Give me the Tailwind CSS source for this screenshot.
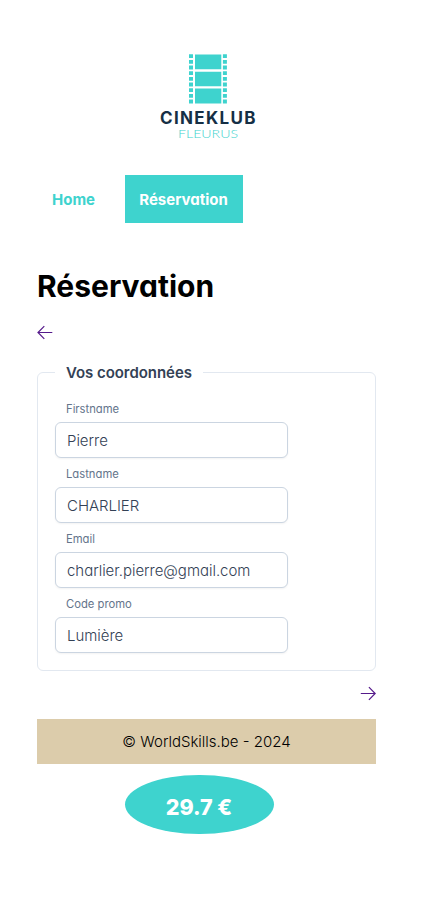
<!DOCTYPE html>
<html lang="fr">
<head>
<meta charset="utf-8">
<meta name="viewport" content="width=device-width, initial-scale=1">
<title>Cineklub Fleurus</title>
<script src="https://cdn.jsdelivr.net/npm/@tailwindcss/browser@4"></script>
</head>
<body class="bg-white font-['Inter',sans-serif] [font-feature-settings:'cv11'] text-[15px] text-black">
<div class="ml-[37px] w-[339px] pt-[50px]">
  <header class="flex justify-center">
    <svg class="block ml-[7px] h-[95px] w-[120px]" viewBox="150 50 120 95" role="img" aria-label="Cineklub Fleurus">
      <g fill="#3ed3ce">
        <path d="M195 54.500h26.300v14.800h-26.300zM195 71.700h26.300v14.600h-26.300zM195 88.500h26.300v15h-26.300z"/>
        <path id="perf" d="M189 54.300h4v3.800h-4zM189 59.900h4v3.900h-4zM189 65.600h4v3.900h-4zM189 71.200h4v3.900h-4zM189 76.900h4v3.900h-4zM189 82.500h4v3.900h-4zM189 88.200h4v3.900h-4zM189 93.900h4v3.900h-4zM189 99.500h4v3.900h-4z"/>
        <use href="#perf" x="33.900"/>
      </g>
      <text x="160" y="123.800" textLength="95.500" lengthAdjust="spacing" font-family="Inter, sans-serif" font-weight="700" font-size="17" fill="#152f45">CINEKLUB</text>
      <text x="178" y="138" textLength="60" lengthAdjust="spacingAndGlyphs" font-family="Lato, sans-serif" font-weight="300" font-size="11.800" fill="#3ed3ce">FLEURUS</text>
    </svg>
  </header>

  <nav class="mt-[30px] flex h-12 gap-[14.500px] font-bold leading-[50px] text-[#3ed3ce]">
    <a class="w-[73px] pl-[15px]">Home</a>
    <a class="w-[118px] bg-[#3ed3ce] text-center text-white">Réservation</a>
  </nav>

  <h1 class="mt-[45px] text-[30px] leading-9 font-bold">Réservation</h1>
  <a class="mt-[20px] block h-4 text-[#551a8b]">
    <svg class="h-4 w-4" viewBox="0 0 16 16" fill="none" stroke="currentColor" stroke-width="1.200"><path d="M15.300 8.500H1M7.300 2.200L1 8.500L7.300 14.800"/></svg>
  </a>

  <fieldset class="mt-[22px] h-[308.500px] rounded-md border border-[#e2e8f0] pl-[17px]">
    <legend class="h-[20px] px-[11px] text-[15px] leading-[22px] font-semibold tracking-[-0.05px] text-[#334155]">Vos coordonnées</legend>
    <div class="flex w-[232.500px] flex-col pt-[19px]">
      <label class="h-[65px]"><span class="block h-[21px] pl-[11px] text-[11.250px] leading-[17px] text-[#64748b]">Firstname</span>
        <input class="block h-9 w-full rounded-md border border-[#cbd5e1] bg-white px-[11px] font-light text-[15px] tracking-[-0.03px] text-[#334155] shadow-xs" value="Pierre"></label>
      <label class="h-[65px]"><span class="block h-[21px] pl-[11px] text-[11.250px] leading-[17px] text-[#64748b]">Lastname</span>
        <input class="block h-9 w-full rounded-md border border-[#cbd5e1] bg-white px-[11px] font-light text-[15px] tracking-[-0.03px] text-[#334155] shadow-xs" value="CHARLIER"></label>
      <label class="h-[65px]"><span class="block h-[21px] pl-[11px] text-[11.250px] leading-[17px] text-[#64748b]">Email</span>
        <input class="block h-9 w-full rounded-md border border-[#cbd5e1] bg-white px-[11px] font-light text-[15px] tracking-[-0.03px] text-[#334155] shadow-xs" value="charlier.pierre@gmail.com"></label>
      <label class="h-[65px]"><span class="block h-[21px] pl-[11px] text-[11.250px] leading-[17px] text-[#64748b]">Code promo</span>
        <input class="block h-9 w-full rounded-md border border-[#cbd5e1] bg-white px-[11px] font-light text-[15px] tracking-[-0.03px] text-[#334155] shadow-xs" value="Lumière"></label>
    </div>
  </fieldset>

  <a class="mt-[14.500px] flex h-4 justify-end text-[#551a8b]">
    <svg class="h-4 w-4" viewBox="0 0 16 16" fill="none" stroke="currentColor" stroke-width="1.200"><path d="M.8 8.500H15M8.900 2.200L15.200 8.500L8.900 14.800"/></svg>
  </a>

  <footer class="mt-[18px] h-[44.500px] bg-[#dcccab] text-center text-[15px] leading-[45px] font-light">© WorldSkills.be - 2024</footer>
  <div class="mt-[11px] ml-[87.500px] h-[59.500px] w-[149px] rounded-[50%] bg-[#3ed3ce] text-center text-[21.500px] leading-[64px] font-extrabold text-white">29.7 €</div>
</div>
</body>
</html>
